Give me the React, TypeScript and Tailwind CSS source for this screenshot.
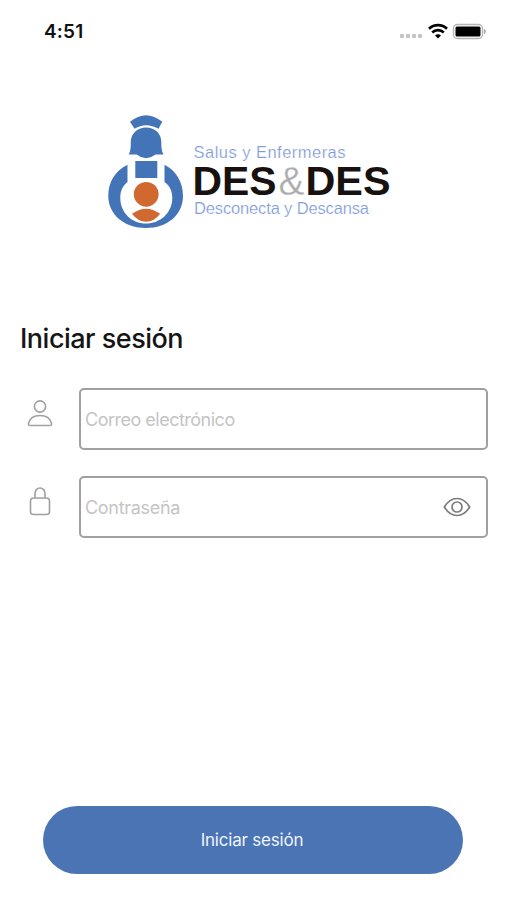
import { useState } from "react";

const StatusBar = () => {
  return (
    <header className="flex h-[62px] items-center justify-between pl-11 pr-5">
      <span className="text-[19px] font-semibold leading-none tracking-[0.2px] text-[#111]">4:51</span>
      <svg width="88" height="20" viewBox="0 0 88 20">
        <g fill="#c4c4c4">
          <rect x="1" y="13" width="4" height="4" rx="1" />
          <rect x="7" y="13" width="4" height="4" rx="1" />
          <rect x="13" y="13" width="4" height="4" rx="1" />
          <rect x="19" y="13" width="4" height="4" rx="1" />
        </g>
        <g fill="none" stroke="#000" strokeWidth="2.7">
          <path d="M30 7.8a13 13 0 0 1 18 0" />
          <path d="M33.2 11.4a8.4 8.4 0 0 1 11.6 0" />
        </g>
        <path d="M39 17.6l-3-3a4.3 4.3 0 0 1 6 0z" />
        <rect x="54.5" y="3.5" width="29" height="14" rx="4" fill="#fff" stroke="#b5b5b5" strokeWidth="1.4" />
        <rect x="56.5" y="5.5" width="25" height="10" rx="1.5" />
        <path d="M85 8c2.4.6 2.4 4.4 0 5z" fill="#a5a5a5" />
      </svg>
    </header>
  );
};

const Logo = () => {
  return (
    <svg width="290" height="124" viewBox="104 110 290 124" className="font-['Liberation_Sans',sans-serif]">
      <g fill="#4474b8">
        <path d="M130 121.8Q146 108.5 162.3 121.8L158.5 128.8Q146 121.5 134.5 128.8Z" />
        <path d="M128.7 154.6C130.6 151.5 130.8 147 130.8 142C130.8 134 137 127.5 146 127.5C155.5 127.5 161.3 134 161.3 142C161.3 147 161.6 151.500 163.500 154.600H155.600Q146 162 136.600 154.600Z" />
        <rect x="135.3" y="161" width="22" height="17" />
        <path d="M127.5 164.8C115 171 108.3 182 108.3 196C108.3 215 125 228 146 228C167 228 183 215 183 196C183 182 176 170.5 164.5 164.8V182C170 186 172.3 191 172.3 198C172.3 213 160 223.5 146 223.5C132 223.5 120.3 213 120.3 198C120.3 191 122.5 186 127.5 182Z" />
      </g>
      <g fill="#d0682f">
        <circle cx="146.2" cy="194.3" r="12.4" />
        <path d="M132 213.8Q146.2 203.5 160.2 213.8Q154 221.8 146.2 221.8Q138 221.8 132 213.8Z" />
      </g>
      <g fill="#819cda" stroke="#fff" strokeWidth="0.2" fontSize="16.5">
        <text x="193.5" y="157.5" textLength="152">Salus y Enfermeras</text>
        <text x="194" y="213.5" textLength="175">Desconecta y Descansa</text>
      </g>
      <g fontSize="41" fontWeight="700" fill="#17120f">
        <text x="192.5" y="194.5" textLength="84" lengthAdjust="spacingAndGlyphs">DES</text>
        <text x="278.5" y="194.5" textLength="26" lengthAdjust="spacingAndGlyphs" fontWeight="400" fill="#acacae" stroke="#fff" strokeWidth="0.3">&amp;</text>
        <text x="305.5" y="194.5" textLength="85" lengthAdjust="spacingAndGlyphs">DES</text>
      </g>
    </svg>
  );
};

const UserIcon = () => (
  <svg width="26" height="28" viewBox="0 0 26 28" fill="none" stroke="#a0a0a0" strokeWidth="1.6">
    <circle cx="13" cy="6.5" r="5.6" />
    <path d="M3 25.5C1.3 25.5 1.3 24.5 1.6 23C2.8 18.5 7 15.5 13 15.5S23.2 18.5 24.4 23C24.7 24.5 24.7 25.5 23 25.5Z" />
  </svg>
);

const LockIcon = () => (
  <svg width="26" height="30" viewBox="0 0 26 30" fill="none" stroke="#a0a0a0" strokeWidth="1.6">
    <path d="M8 12V7.5a5 5.5 0 0 1 10 0V12" />
    <rect x="3.5" y="12" width="19" height="16.5" rx="3" />
  </svg>
);

const EyeIcon = () => (
  <svg width="28" height="20" viewBox="0 0 28 20" fill="none" stroke="#7c7c7c" strokeWidth="1.7">
    <path d="M1.3 10C5 4 9.5 1.5 14 1.5S23 4 26.7 10C23 16 18.5 18.5 14 18.5S5 16 1.3 10Z" strokeLinejoin="round" />
    <circle cx="14" cy="10" r="5" />
  </svg>
);

const App = () => {
  const [showPassword, setShowPassword] = useState(false);

  return (
    <div className="flex h-[900px] w-[507px] flex-col bg-white font-['Inter',sans-serif]">
      <StatusBar />
      <div className="mt-12 flex pl-[104px]">
        <Logo />
      </div>
      <main className="mt-[85px] flex flex-col pl-5 pr-[19px]">
        <h1 className="text-[27px] font-medium leading-10 tracking-[-0.5px] text-[#151515]">Iniciar sesión</h1>
        <div className="mt-[29px] flex">
          <div className="w-[59px] pl-[7px] pt-3">
            <UserIcon />
          </div>
          <label className="flex h-[62px] flex-1 items-center rounded-[5px] border-2 border-[#a0a0a0] px-1">
            <input
              type="email"
              placeholder="Correo electrónico"
              className="w-full text-[18px] tracking-[-0.5px] outline-none placeholder:text-[#c4c4c4]"
            />
          </label>
        </div>
        <div className="mt-[26px] flex">
          <div className="w-[59px] pl-[7px] pt-[10px]">
            <LockIcon />
          </div>
          <label className="flex h-[62px] flex-1 items-center rounded-[5px] border-2 border-[#a0a0a0] pl-1 pr-[15px]">
            <input
              type={showPassword ? "text" : "password"}
              placeholder="Contraseña"
              className="min-w-0 flex-1 text-[18px] tracking-[-0.3px] outline-none placeholder:text-[#c4c4c4]"
            />
            <button type="button" aria-label="Mostrar contraseña" onClick={() => setShowPassword(!showPassword)}>
              <EyeIcon />
            </button>
          </label>
        </div>
      </main>
      <footer className="mb-[26px] mt-auto flex pl-[43px] pr-11">
        <button
          type="button"
          className="h-[68px] flex-1 rounded-full bg-[#4b74b5] pr-0.5 pt-0.5 text-[17px] tracking-[-0.2px] text-[#eef4ff]"
        >
          Iniciar sesión
        </button>
      </footer>
    </div>
  );
};

export default App;
